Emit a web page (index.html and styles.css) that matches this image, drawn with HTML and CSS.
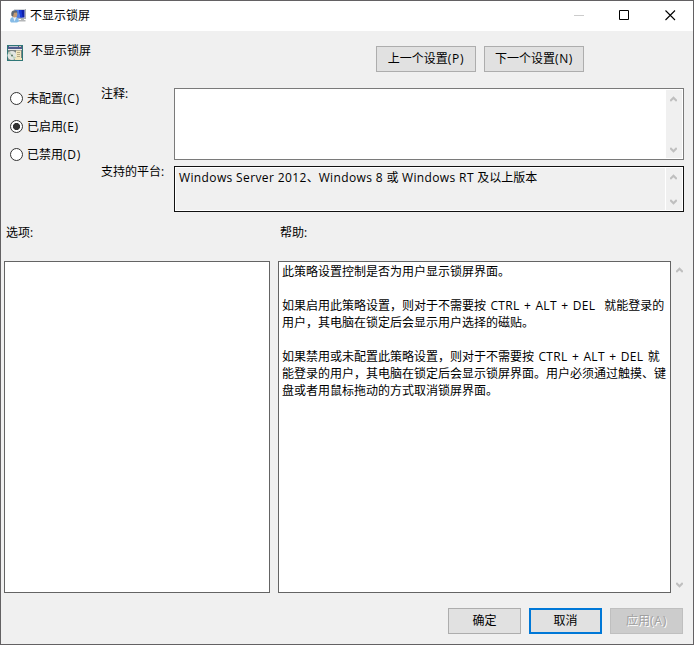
FILE: index.html
```html
<!DOCTYPE html>
<html lang="zh-CN">
<head>
<meta charset="utf-8">
<title>不显示锁屏</title>
<link rel="stylesheet" href="styles.css">
</head>
<body>
<div class="window">
  <header class="titlebar">
    <svg class="title-icon" width="17" height="16" viewBox="0 0 17 16">
      <path d="M5 1h12v10H5z" fill="#d3d6da"/>
      <path d="M6 2h9.500v7.500H6z" fill="#1020a8"/>
      <path d="M6 2h4l1.500 7.500H6z" fill="#4a7ae4"/>
      <path d="M10 2h2.500l1 7.500h-2z" fill="#1838d8"/>
      <path d="M16 1h1v10H9v-1h7z" fill="#a9adb2"/>
      <path d="M12 11h3v1h1.500v1.500H10V12h2z" fill="#b4b6b8"/>
      <path d="M1 13q0-3.500 3-4h3q3 1 3 4.500l-2 1H2z" fill="#86bbe6"/>
      <path d="M4 9l1.500 4.500L7.500 9z" fill="#e4f1fa"/>
      <ellipse cx="5.600" cy="6.200" rx="2.700" ry="3.200" fill="#c39a72"/>
      <path d="M2.500 8Q1.300 2.500 5.500 2.300q3 0 2.800 2.200L5 4.800 4 8.500z" fill="#5c6670"/>
    </svg>
    <h1 class="title">不显示锁屏</h1>
    <div class="controls">
      <svg width="46" height="30" viewBox="0 0 46 30"><path d="M18 14.500h10" stroke="#ccc"/></svg>
      <svg width="46" height="30" viewBox="0 0 46 30"><path d="M17.500 9.500h9v9h-9z" fill="none" stroke="#000"/></svg>
      <svg width="46" height="30" viewBox="0 0 46 30"><path d="M17.500 9.500l9.500 9.500M27 9.500L17.500 19" fill="none" stroke="#000" stroke-width="1.100"/></svg>
    </div>
  </header>

  <section class="heading">
    <svg class="policy-icon" width="16" height="16" viewBox="0 0 16 16">
      <path d="M0 0h16v16H0z" fill="#2f7777"/>
      <path d="M1 1h14v3H1z" fill="#4f5a8c"/>
      <path d="M2 1h9v1H2z" fill="#b9c2d2"/>
      <path d="M12 1h2v1h-2z" fill="#d8c9a8"/>
      <path d="M1 4h14v1H1z" fill="#e8e8e8"/>
      <path d="M1 5h14v10H1z" fill="#7c8583"/>
      <circle cx="5" cy="10.500" r="4.500" fill="#e2e6e2"/>
      <path d="M5 10.500L1 8.500 3 6.500zM5 10.500l4 2-2 2z" fill="#bcd3bd"/>
      <circle cx="5" cy="10.500" r="1" fill="#5b7565"/>
      <path d="M9 5.500h5V13h1v2H8v-2h1z" fill="#f2e6bd"/>
      <path d="M10 7.500h3M10 9.500h3M10 11.500h3" stroke="#a39a78" stroke-width=".8"/>
    </svg>
    <h2 class="policy-name">不显示锁屏</h2>
    <nav class="pager">
      <button class="button">上一个设置<span class="key">(P)</span></button>
      <button class="button">下一个设置<span class="key">(N)</span></button>
    </nav>
  </section>

  <section class="config">
    <div class="states">
      <label class="state"><i class="radio"></i>未配置<span class="key">(C)</span></label>
      <label class="state"><i class="radio radio-on"></i>已启用<span class="key">(E)</span></label>
      <label class="state"><i class="radio"></i>已禁用<span class="key">(D)</span></label>
    </div>
    <div class="field-label">注释:</div>
    <div class="field comment">
      <div class="field-body"></div>
      <div class="scrollbar">
        <svg width="7" height="6" viewBox="0 0 7 6"><path d="M.2 5L3.500 1.700 6.800 5" class="arrow"/></svg>
        <svg width="7" height="6" viewBox="0 0 7 6"><path d="M.2 1L3.500 4.300 6.800 1" class="arrow"/></svg>
      </div>
    </div>
    <div class="field-label">支持的平台:</div>
    <div class="field platform">
      <div class="field-body"><span class="latin">Windows Server 2012</span>、<span class="latin">Windows 8 </span>或<span class="latin"> Windows RT </span>及以上版本</div>
      <div class="scrollbar">
        <svg width="7" height="6" viewBox="0 0 7 6"><path d="M.2 5L3.500 1.700 6.800 5" class="arrow"/></svg>
        <svg width="7" height="6" viewBox="0 0 7 6"><path d="M.2 1L3.500 4.300 6.800 1" class="arrow"/></svg>
      </div>
    </div>
  </section>

  <section class="panels">
    <div class="panel-label">选项:</div>
    <div class="panel-label">帮助:</div>
    <div class="panel"></div>
    <div class="help">
      <div class="panel help-text">
        <p>此策略设置控制是否为用户显示锁屏界面。</p>
        <p><span class="line">如果启用此策略设置，则对于不需要按<span class="caps"> CTRL + ALT + DEL  </span>就能登录的</span><span class="line">用户，其电脑在锁定后会显示用户选择的磁贴。</span></p>
        <p><span class="line">如果禁用或未配置此策略设置，则对于不需要按<span class="caps"> CTRL + ALT + DEL </span>就</span><span class="line">能登录的用户，其电脑在锁定后会显示锁屏界面。用户必须通过触摸、键</span><span class="line">盘或者用鼠标拖动的方式取消锁屏界面。</span></p>
      </div>
      <div class="scrollbar">
        <svg width="7" height="6" viewBox="0 0 7 6"><path d="M.2 5L3.500 1.700 6.800 5" class="arrow"/></svg>
        <svg width="7" height="6" viewBox="0 0 7 6"><path d="M.2 1L3.500 4.300 6.800 1" class="arrow"/></svg>
      </div>
    </div>
  </section>

  <footer class="actions">
    <button class="button">确定</button>
    <button class="button button-focus">取消</button>
    <button class="button" disabled>应用<span class="key">(A)</span></button>
  </footer>
</div>
</body>
</html>
```
FILE: styles.css
```css
* { box-sizing: border-box; }

body {
  margin: 0;
  font: 12px/17px "Open Sans", "Noto Sans CJK SC", sans-serif;
  color: #000;
  background: #f0f0f0;
}

svg { display: block; }
h1, h2, p { margin: 0; font: inherit; }

.window {
  width: 694px;
  height: 645px;
  border: 1px solid #636163;
  background: #f0f0f0;
  display: flex;
  flex-direction: column;
}

.titlebar {
  height: 30px;
  background: #fff;
  display: flex;
  align-items: center;
  padding-left: 8px;
}
.title { margin: -2px 0 0 4px; }
.controls { display: flex; margin: 0 -1px 0 auto; }

.heading {
  height: 57px;
  display: flex;
  align-items: flex-start;
  padding-left: 6px;
}
.policy-icon { margin-top: 14px; }
.policy-name { margin: 11px 0 0 8px; }
.pager {
  display: flex;
  gap: 8px;
  margin: 15px 109px 0 auto;
}

.button {
  width: 100px;
  height: 26px;
  padding: 0 0 1px;
  border: 1px solid #adadad;
  background: #e1e1e1;
  font: inherit;
  color: #000;
  white-space: nowrap;
}
.button-focus { border: 2px solid #0078d7; }
.button:disabled {
  border-color: #bfbfbf;
  background: #ccc;
  color: #a0a0a0;
  text-shadow: 1px 1px 0 #fff;
}
.key { letter-spacing: .7px; }
.latin { letter-spacing: .37px; }
.caps { letter-spacing: .3px; word-spacing: 1px; }

.config {
  display: grid;
  grid-template-columns: 99px 74px 510px;
  grid-template-rows: 72px 46px;
  row-gap: 6px;
}
.states {
  grid-row: 1 / 3;
  padding: 2px 0 0 9px;
}
.state {
  display: flex;
  align-items: center;
  height: 17px;
  margin-bottom: 11px;
  white-space: nowrap;
}
.radio {
  width: 13px;
  height: 13px;
  margin-right: 4px;
  border: 1px solid #333;
  border-radius: 50%;
  background: #fff;
}
.radio-on { background: radial-gradient(circle, #333 3.2px, #fff 3.9px); }
.field-label { margin: -3px 0 0 1px; }
.field {
  display: flex;
  padding: 1px;
  border: 1px solid #7a7a7a;
  background: #fff;
}
.field-body { flex: 1; }
.platform { border-color: #111; }
.platform .field-body {
  margin-right: 1px;
  padding: 1px 0 0 3px;
  background: #f0f0f0;
  white-space: pre;
}
.scrollbar {
  width: 16px;
  padding: 6px 4px 5px;
  background: #f0f0f0;
  display: flex;
  flex-direction: column;
  justify-content: space-between;
}
.arrow { fill: none; stroke: #bfbfbf; stroke-width: 2.2; }

.panels {
  display: grid;
  grid-template-columns: 266px 411px;
  grid-template-rows: 49px 332px;
  column-gap: 8px;
  padding-left: 3px;
}
.panel-label { padding: 12px 0 0 2px; }
.panel { border: 1px solid #646464; background: #fff; }
.help { display: flex; }
.help-text {
  width: 393px;
  padding: 1px 0 0 3px;
}
.help-text p { white-space: pre; }
.help-text p + p { margin-top: 17px; }
.line { display: block; }
.help .scrollbar { width: 18px; padding: 6px 5px 5px; }

.actions {
  display: flex;
  justify-content: flex-end;
  gap: 8px;
  padding: 15px 10px 0 0;
}
.actions .button { width: 73px; }
```
